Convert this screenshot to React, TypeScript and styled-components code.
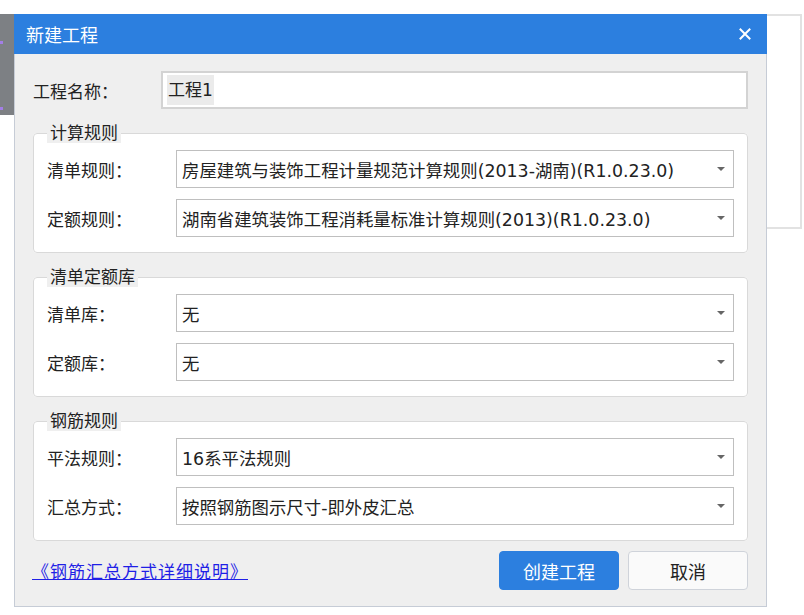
import React from 'react';
import styled, { createGlobalStyle } from 'styled-components';

const GlobalStyle = createGlobalStyle`
  html, body {
    margin: 0;
    padding: 0;
    background: #ffffff;
  }
  body {
    font-family: "DejaVu Sans", "Noto Sans CJK SC", sans-serif;
    color: #222;
  }
`;

type Group = {
  title: string;
  rows: { label: string; value: string }[];
};

const groups: Group[] = [
  {
    title: '计算规则',
    rows: [
      { label: '清单规则：', value: '房屋建筑与装饰工程计量规范计算规则(2013-湖南)(R1.0.23.0)' },
      { label: '定额规则：', value: '湖南省建筑装饰工程消耗量标准计算规则(2013)(R1.0.23.0)' },
    ],
  },
  {
    title: '清单定额库',
    rows: [
      { label: '清单库：', value: '无' },
      { label: '定额库：', value: '无' },
    ],
  },
  {
    title: '钢筋规则',
    rows: [
      { label: '平法规则：', value: '16系平法规则' },
      { label: '汇总方式：', value: '按照钢筋图示尺寸-即外皮汇总' },
    ],
  },
];

const App: React.FC = () => {
  return (
    <Page>
      <GlobalStyle />
      {/* 背后的窗口内容 */}
      <LeftStrip>
        <Dot style={{ top: 27 }} />
        <Dot style={{ top: 93 }} />
      </LeftStrip>
      <RightPanel />

      {/* 对话框 */}
      <Dialog>
        <TitleBar>
          <TitleText>新建工程</TitleText>
          <CloseButton>
            <svg width="12" height="12" viewBox="0 0 12 12">
              <path d="M1.5 1.5 L10.5 10.5 M10.5 1.5 L1.5 10.5" stroke="#fff" strokeWidth="2" strokeLinecap="square" />
            </svg>
          </CloseButton>
        </TitleBar>

        <Body>
          <NameRow>
            <NameLabel>工程名称：</NameLabel>
            <TextInput>
              <Selected>工程1</Selected>
            </TextInput>
          </NameRow>

          {groups.map((g) => (
            <GroupBox key={g.title}>
              <Legend>{g.title}</Legend>
              {g.rows.map((r) => (
                <FieldRow key={r.label}>
                  <FieldLabel>{r.label}</FieldLabel>
                  <Select>
                    <SelectText>{r.value}</SelectText>
                    <Caret />
                  </Select>
                </FieldRow>
              ))}
            </GroupBox>
          ))}

          <Footer>
            <HelpLink href="#">《钢筋汇总方式详细说明》</HelpLink>
            <Buttons>
              <Button $primary>创建工程</Button>
              <Button>取消</Button>
            </Buttons>
          </Footer>
        </Body>
      </Dialog>
    </Page>
  );
};

const Page = styled.div`
  position: relative;
  width: 804px;
  height: 615px;
  overflow: hidden;
  background: #ffffff;
`;

const LeftStrip = styled.div`
  position: absolute;
  left: 0;
  top: 14px;
  width: 14px;
  height: 101px;
  background: #7d8084;
`;

const Dot = styled.span`
  position: absolute;
  left: 0;
  width: 3px;
  height: 3px;
  background: #a37ee6;
`;

const RightPanel = styled.div`
  position: absolute;
  left: 740px;
  top: 14px;
  width: 58px;
  height: 211px;
  background: #ffffff;
  border: 2px solid #e2e2e2;
`;

const Dialog = styled.div`
  position: absolute;
  left: 14px;
  top: 14px;
  width: 753px;
  box-sizing: border-box;
  background: #efefef;
  border: 1px solid #c6ccd6;
  border-top: none;
`;

const TitleBar = styled.div`
  height: 40px;
  margin: 0 -1px;
  padding: 0 15px 0 12px;
  background: #2c7fdf;
  display: flex;
  align-items: center;
  justify-content: space-between;
`;

const TitleText = styled.div`
  color: #ffffff;
  font-size: 18px;
`;

const CloseButton = styled.div`
  width: 14px;
  height: 14px;
  display: flex;
  align-items: center;
  justify-content: center;
  cursor: pointer;
`;

const Body = styled.div`
  padding: 17px 18px 16px 18px;
  display: flex;
  flex-direction: column;
`;

const NameRow = styled.div`
  display: flex;
  align-items: center;
  height: 38px;
`;

const NameLabel = styled.div`
  width: 128px;
  font-size: 17px;
`;

const TextInput = styled.div`
  flex: 1;
  height: 38px;
  box-sizing: border-box;
  background: #ffffff;
  border: 2px solid #d3d3d3;
  display: flex;
  align-items: center;
  padding-left: 4px;
  font-size: 17px;
`;

const Selected = styled.span`
  background: #ebebeb;
  line-height: 30px;
  padding: 0 1px;
`;

const GroupBox = styled.fieldset`
  margin: 14px 0 0 0;
  padding: 7px 13px 15px 13px;
  border: 1px solid #d9d9d9;
  border-radius: 4px;
  background: #ffffff;
  display: flex;
  flex-direction: column;
  gap: 11px;
  min-width: 0;
`;

const Legend = styled.legend`
  margin-left: 0;
  padding: 0 3px;
  font-size: 17px;
  line-height: 20px;
  background: #efefef;
`;

const FieldRow = styled.div`
  display: flex;
  align-items: center;
  height: 38px;
`;

const FieldLabel = styled.div`
  width: 129px;
  font-size: 17px;
`;

const Select = styled.div`
  flex: 1;
  height: 38px;
  box-sizing: border-box;
  border: 1px solid #bfbfbf;
  background: #ffffff;
  display: flex;
  align-items: center;
  padding: 0 8px 0 5px;
`;

const SelectText = styled.div`
  flex: 1;
  font-size: 17.4px;
  white-space: nowrap;
  overflow: hidden;
`;

const Caret = styled.span`
  width: 0;
  height: 0;
  border-left: 4px solid transparent;
  border-right: 4px solid transparent;
  border-top: 4px solid #666;
`;

const Footer = styled.div`
  margin-top: 10px;
  display: flex;
  align-items: center;
  justify-content: space-between;
`;

const HelpLink = styled.a`
  margin-left: -1px;
  font-size: 17px;
  letter-spacing: 1px;
  color: #1f1fe6;
  text-decoration: underline;
`;

const Buttons = styled.div`
  display: flex;
  gap: 9px;
`;

const Button = styled.button<{ $primary?: boolean }>`
  width: 120px;
  height: 39px;
  box-sizing: border-box;
  border-radius: 4px;
  font-family: inherit;
  font-size: 18px;
  cursor: pointer;
  border: 1px solid ${(p) => (p.$primary ? '#2c7fdf' : '#cfd3da')};
  background: ${(p) => (p.$primary ? '#2c7fdf' : '#fafafa')};
  color: ${(p) => (p.$primary ? '#ffffff' : '#222222')};
`;

export default App;
